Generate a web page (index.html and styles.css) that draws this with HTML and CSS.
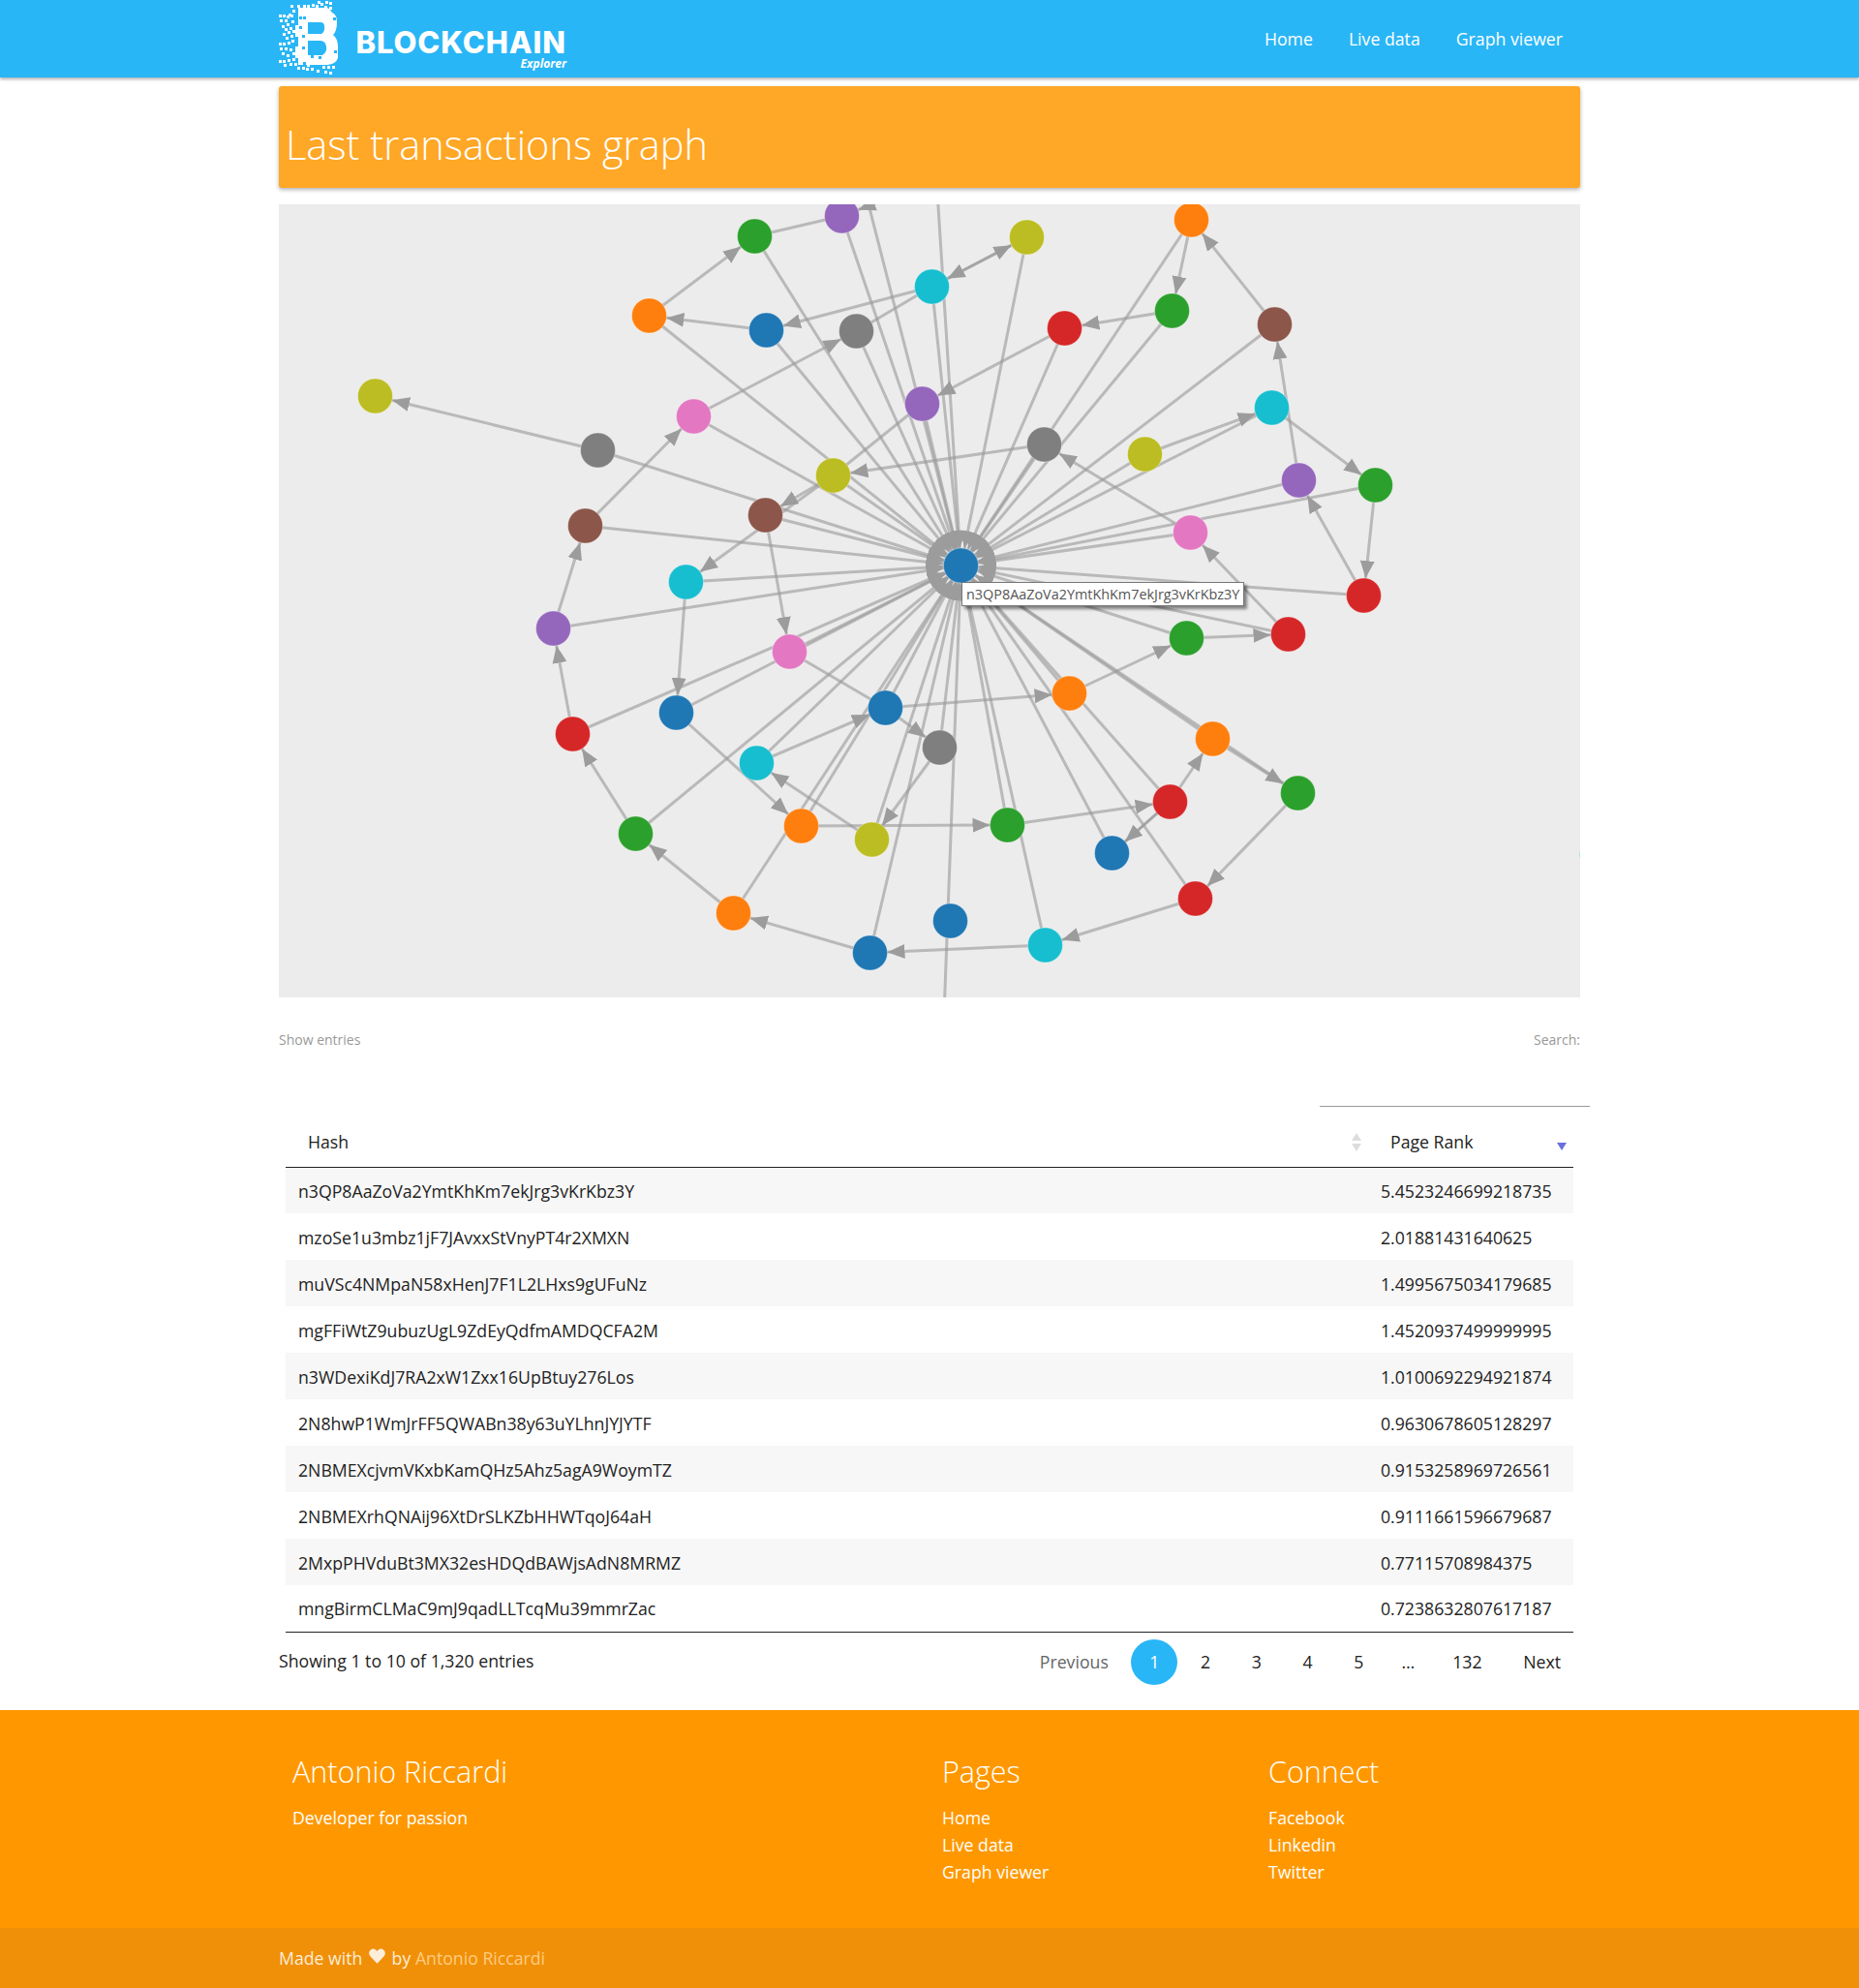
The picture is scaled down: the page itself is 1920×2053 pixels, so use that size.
FILE: index.html
```html
<!DOCTYPE html>
<html lang="en">
<head>
<meta charset="utf-8">
<title>Blockchain Explorer</title>
<link rel="stylesheet" href="styles.css">
</head>
<body>
<header class="topbar">
  <div class="topbar-inner">
    <a class="brand" href="#">
      <svg class="brand-mark" viewBox="0 0 66 78" width="66" height="78" aria-hidden="true">
        <path class="mark-fill" fill-rule="evenodd" d="M20 8 L50 8 Q53 9 55 13 Q60 15 60 23 Q60 32 56 36 Q61 40 61 48 L61 60 Q59 66 50 67 L20 67 L20 60 L17 60 L17 48 L20 48 L20 38 L17 38 L17 26 L20 26Z M30 23 L30 35 L44 35 Q48 32 47 27 Q47 23 43 23Z M30 42 L30 57 L45 57 Q50 54 49 48 Q48 42 43 42Z"/>
        <path class="mark-hole" d="M21 17h3v3h-3z M25 17h3v3h-3z M21 27h3v3h-3z M24 36h3v3h-3z M56 18h3v3h-3z M57 52h3v3h-3z M33 57h3v3h-3z M41 58h3v3h-3z M24 48h3v3h-3z M25 64h3v3h-3z"/>
        <path class="mark-fill" d="M25 5h3v3h-3z M29 5h3v3h-3z M34 4h3v3h-3z M38 5h3v3h-3z M43 3h3v3h-3z M48 1h3v3h-3z M52 2h3v3h-3z M47 6h3v3h-3z M52 7h3v3h-3z M40 1h3v3h-3z M19 5h3v3h-3z M12 5h3v3h-3z M14 10h3v3h-3z M10 14h3v3h-3z M0 15h3v3h-3z M4 15h3v3h-3z M8 16h3v3h-3z M12 15h3v3h-3z M1 20h3v3h-3z M6 20h3v3h-3z M13 21h3v3h-3z M8 24h3v3h-3z M3 26h3v3h-3z M11 28h3v3h-3z M6 29h3v3h-3z M14 31h3v3h-3z M9 32h3v3h-3z M4 34h3v3h-3z M12 36h3v3h-3z M7 38h3v3h-3z M0 44h3v3h-3z M4 44h3v3h-3z M9 43h3v3h-3z M13 41h3v3h-3z M1 49h3v3h-3z M6 49h3v3h-3z M11 50h3v3h-3z M14 54h3v3h-3z M3 54h3v3h-3z M8 56h3v3h-3z M0 62h3v3h-3z M4 62h3v3h-3z M9 61h3v3h-3z M14 60h3v3h-3z M5 66h3v3h-3z M11 65h3v3h-3z M16 65h3v3h-3z M19 69h3v3h-3z M24 69h3v3h-3z M28 70h3v3h-3z M33 70h3v3h-3z M39 72h3v3h-3z M45 68h3v3h-3z M50 68h3v3h-3z M55 68h3v3h-3z M47 73h3v3h-3z M52 74h3v3h-3z M29 66h3v3h-3z"/>
      </svg>
      <span class="brand-text">
        <span class="brand-name">BLOCKCHAIN</span>
        <span class="brand-sub">Explorer</span>
      </span>
    </a>
    <nav class="topnav">
      <a href="#">Home</a>
      <a href="#">Live data</a>
      <a href="#">Graph viewer</a>
    </nav>
  </div>
</header>

<main class="page">
  <section class="title-card"><h1>Last transactions graph</h1></section>

  <section class="graph">
    <svg class="graph-svg" viewBox="287.5 211 1344 819" width="1344" height="819" aria-hidden="true">
      <defs>
        <marker id="a" viewBox="0 -8 20 16" refX="36" refY="0" markerWidth="20" markerHeight="16" markerUnits="userSpaceOnUse" orient="auto">
          <path class="head" d="M0,-7.5 L18,0 L0,7.5Z"/>
        </marker>
      </defs>
      <g class="spokes">
        <line x1="617" y1="465" x2="992" y2="584" marker-end="url(#a)"/>
        <line x1="716" y1="430" x2="992" y2="584" marker-end="url(#a)"/>
        <line x1="604" y1="543" x2="992" y2="584" marker-end="url(#a)"/>
        <line x1="790" y1="532" x2="992" y2="584" marker-end="url(#a)"/>
        <line x1="670" y1="326" x2="992" y2="584" marker-end="url(#a)"/>
        <line x1="791" y1="341" x2="992" y2="584" marker-end="url(#a)"/>
        <line x1="779" y1="244" x2="992" y2="584" marker-end="url(#a)"/>
        <line x1="869" y1="223" x2="992" y2="584" marker-end="url(#a)"/>
        <line x1="884" y1="342" x2="992" y2="584" marker-end="url(#a)"/>
        <line x1="962" y1="296" x2="992" y2="584" marker-end="url(#a)"/>
        <line x1="968" y1="205" x2="992" y2="584" marker-end="url(#a)"/>
        <line x1="895" y1="205" x2="992" y2="584" marker-end="url(#a)"/>
        <line x1="952" y1="417" x2="992" y2="584" marker-end="url(#a)"/>
        <line x1="860" y1="491" x2="992" y2="584" marker-end="url(#a)"/>
        <line x1="708" y1="601" x2="992" y2="584" marker-end="url(#a)"/>
        <line x1="571" y1="649" x2="992" y2="584" marker-end="url(#a)"/>
        <line x1="1060" y1="245" x2="992" y2="584" marker-end="url(#a)"/>
        <line x1="1099" y1="339" x2="992" y2="584" marker-end="url(#a)"/>
        <line x1="1078" y1="459" x2="992" y2="584" marker-end="url(#a)"/>
        <line x1="1230" y1="227" x2="992" y2="584" marker-end="url(#a)"/>
        <line x1="1210" y1="321" x2="992" y2="584" marker-end="url(#a)"/>
        <line x1="1316" y1="335" x2="992" y2="584" marker-end="url(#a)"/>
        <line x1="1182" y1="469" x2="992" y2="584" marker-end="url(#a)"/>
        <line x1="1313" y1="421" x2="992" y2="584" marker-end="url(#a)"/>
        <line x1="1341" y1="496" x2="992" y2="584" marker-end="url(#a)"/>
        <line x1="1420" y1="501" x2="992" y2="584" marker-end="url(#a)"/>
        <line x1="1229" y1="550" x2="992" y2="584" marker-end="url(#a)"/>
        <line x1="1408" y1="615" x2="992" y2="584" marker-end="url(#a)"/>
        <line x1="1330" y1="655" x2="992" y2="584" marker-end="url(#a)"/>
        <line x1="1225" y1="659" x2="992" y2="584" marker-end="url(#a)"/>
        <line x1="1104" y1="716" x2="992" y2="584" marker-end="url(#a)"/>
        <line x1="1252" y1="763" x2="992" y2="584" marker-end="url(#a)"/>
        <line x1="1340" y1="819" x2="992" y2="584" marker-end="url(#a)"/>
        <line x1="1208" y1="828" x2="992" y2="584" marker-end="url(#a)"/>
        <line x1="1234" y1="928" x2="992" y2="584" marker-end="url(#a)"/>
        <line x1="1148" y1="881" x2="992" y2="584" marker-end="url(#a)"/>
        <line x1="1079" y1="976" x2="992" y2="584" marker-end="url(#a)"/>
        <line x1="1040" y1="852" x2="992" y2="584" marker-end="url(#a)"/>
        <line x1="975" y1="1035" x2="992" y2="584" marker-end="url(#a)"/>
        <line x1="970" y1="772" x2="992" y2="584" marker-end="url(#a)"/>
        <line x1="900" y1="867" x2="992" y2="584" marker-end="url(#a)"/>
        <line x1="898" y1="984" x2="992" y2="584" marker-end="url(#a)"/>
        <line x1="827" y1="853" x2="992" y2="584" marker-end="url(#a)"/>
        <line x1="757" y1="943" x2="992" y2="584" marker-end="url(#a)"/>
        <line x1="914" y1="731" x2="992" y2="584" marker-end="url(#a)"/>
        <line x1="781" y1="788" x2="992" y2="584" marker-end="url(#a)"/>
        <line x1="656" y1="861" x2="992" y2="584" marker-end="url(#a)"/>
        <line x1="815" y1="673" x2="992" y2="584" marker-end="url(#a)"/>
        <line x1="698" y1="736" x2="992" y2="584" marker-end="url(#a)"/>
        <line x1="591" y1="758" x2="992" y2="584" marker-end="url(#a)"/>
      </g>
      <g class="links">
        <line x1="617" y1="465" x2="387" y2="409" marker-end="url(#a)"/>
        <line x1="604" y1="543" x2="716" y2="430" marker-end="url(#a)"/>
        <line x1="716" y1="430" x2="884" y2="342" marker-end="url(#a)"/>
        <line x1="670" y1="326" x2="779" y2="244" marker-end="url(#a)"/>
        <line x1="791" y1="341" x2="670" y2="326" marker-end="url(#a)"/>
        <line x1="962" y1="296" x2="791" y2="341" marker-end="url(#a)"/>
        <line x1="779" y1="244" x2="869" y2="223"/>
        <line x1="930" y1="200" x2="869" y2="223" marker-end="url(#a)"/>
        <line x1="884" y1="342" x2="962" y2="296"/>
        <line x1="962" y1="296" x2="1060" y2="245" marker-end="url(#a)"/>
        <line x1="1060" y1="245" x2="962" y2="296" marker-end="url(#a)"/>
        <line x1="952" y1="417" x2="860" y2="491"/>
        <line x1="860" y1="491" x2="790" y2="532" marker-end="url(#a)"/>
        <line x1="860" y1="491" x2="708" y2="601" marker-end="url(#a)"/>
        <line x1="790" y1="532" x2="815" y2="673" marker-end="url(#a)"/>
        <line x1="1099" y1="339" x2="952" y2="417" marker-end="url(#a)"/>
        <line x1="1078" y1="459" x2="860" y2="491" marker-end="url(#a)"/>
        <line x1="1230" y1="227" x2="1210" y2="321" marker-end="url(#a)"/>
        <line x1="1210" y1="321" x2="1099" y2="339" marker-end="url(#a)"/>
        <line x1="1316" y1="335" x2="1230" y2="227" marker-end="url(#a)"/>
        <line x1="1341" y1="496" x2="1316" y2="335" marker-end="url(#a)"/>
        <line x1="1182" y1="469" x2="1313" y2="421" marker-end="url(#a)"/>
        <line x1="1229" y1="550" x2="1078" y2="459" marker-end="url(#a)"/>
        <line x1="1313" y1="421" x2="1420" y2="501" marker-end="url(#a)"/>
        <line x1="1420" y1="501" x2="1408" y2="615" marker-end="url(#a)"/>
        <line x1="1408" y1="615" x2="1341" y2="496" marker-end="url(#a)"/>
        <line x1="1330" y1="655" x2="1229" y2="550" marker-end="url(#a)"/>
        <line x1="1225" y1="659" x2="1330" y2="655" marker-end="url(#a)"/>
        <line x1="1104" y1="716" x2="1225" y2="659" marker-end="url(#a)"/>
        <line x1="914" y1="731" x2="1104" y2="716" marker-end="url(#a)"/>
        <line x1="815" y1="673" x2="914" y2="731"/>
        <line x1="914" y1="731" x2="970" y2="772" marker-end="url(#a)"/>
        <line x1="781" y1="788" x2="914" y2="731" marker-end="url(#a)"/>
        <line x1="708" y1="601" x2="698" y2="736" marker-end="url(#a)"/>
        <line x1="698" y1="736" x2="827" y2="853" marker-end="url(#a)"/>
        <line x1="571" y1="649" x2="604" y2="543" marker-end="url(#a)"/>
        <line x1="591" y1="758" x2="571" y2="649" marker-end="url(#a)"/>
        <line x1="656" y1="861" x2="591" y2="758" marker-end="url(#a)"/>
        <line x1="757" y1="943" x2="656" y2="861" marker-end="url(#a)"/>
        <line x1="898" y1="984" x2="757" y2="943" marker-end="url(#a)"/>
        <line x1="827" y1="853" x2="1040" y2="852" marker-end="url(#a)"/>
        <line x1="900" y1="867" x2="781" y2="788" marker-end="url(#a)"/>
        <line x1="970" y1="772" x2="900" y2="867" marker-end="url(#a)"/>
        <line x1="1079" y1="976" x2="898" y2="984" marker-end="url(#a)"/>
        <line x1="1234" y1="928" x2="1079" y2="976" marker-end="url(#a)"/>
        <line x1="1340" y1="819" x2="1234" y2="928" marker-end="url(#a)"/>
        <line x1="1252" y1="763" x2="1340" y2="819" marker-end="url(#a)"/>
        <line x1="1208" y1="828" x2="1252" y2="763" marker-end="url(#a)"/>
        <line x1="1208" y1="828" x2="1148" y2="881" marker-end="url(#a)"/>
        <line x1="1148" y1="881" x2="1208" y2="828"/>
        <line x1="1040" y1="852" x2="1208" y2="828" marker-end="url(#a)"/>
      </g>
      <circle class="hub-ring" cx="992" cy="584" r="31"/>
      <g class="nodes">
        <circle class="c-blue" cx="992" cy="584" r="18"/>
        <circle class="c-olive" cx="387" cy="409" r="18"/>
        <circle class="c-gray" cx="617" cy="465" r="18"/>
        <circle class="c-pink" cx="716" cy="430" r="18"/>
        <circle class="c-brown" cx="604" cy="543" r="18"/>
        <circle class="c-brown" cx="790" cy="532" r="18"/>
        <circle class="c-olive" cx="860" cy="491" r="18"/>
        <circle class="c-orange" cx="670" cy="326" r="18"/>
        <circle class="c-blue" cx="791" cy="341" r="18"/>
        <circle class="c-gray" cx="884" cy="342" r="18"/>
        <circle class="c-green" cx="779" cy="244" r="18"/>
        <circle class="c-purple" cx="869" cy="223" r="18"/>
        <circle class="c-cyan" cx="962" cy="296" r="18"/>
        <circle class="c-purple" cx="952" cy="417" r="18"/>
        <circle class="c-cyan" cx="708" cy="601" r="18"/>
        <circle class="c-olive" cx="1060" cy="245" r="18"/>
        <circle class="c-orange" cx="1230" cy="227" r="18"/>
        <circle class="c-green" cx="1210" cy="321" r="18"/>
        <circle class="c-red" cx="1099" cy="339" r="18"/>
        <circle class="c-brown" cx="1316" cy="335" r="18"/>
        <circle class="c-cyan" cx="1313" cy="421" r="18"/>
        <circle class="c-olive" cx="1182" cy="469" r="18"/>
        <circle class="c-gray" cx="1078" cy="459" r="18"/>
        <circle class="c-purple" cx="1341" cy="496" r="18"/>
        <circle class="c-green" cx="1420" cy="501" r="18"/>
        <circle class="c-pink" cx="1229" cy="550" r="18"/>
        <circle class="c-red" cx="1408" cy="615" r="18"/>
        <circle class="c-purple" cx="571" cy="649" r="18"/>
        <circle class="c-pink" cx="815" cy="673" r="18"/>
        <circle class="c-blue" cx="698" cy="736" r="18"/>
        <circle class="c-red" cx="591" cy="758" r="18"/>
        <circle class="c-blue" cx="914" cy="731" r="18"/>
        <circle class="c-gray" cx="970" cy="772" r="18"/>
        <circle class="c-cyan" cx="781" cy="788" r="18"/>
        <circle class="c-green" cx="656" cy="861" r="18"/>
        <circle class="c-orange" cx="827" cy="853" r="18"/>
        <circle class="c-olive" cx="900" cy="867" r="18"/>
        <circle class="c-orange" cx="757" cy="943" r="18"/>
        <circle class="c-blue" cx="898" cy="984" r="18"/>
        <circle class="c-blue" cx="981" cy="951" r="18"/>
        <circle class="c-cyan" cx="1079" cy="976" r="18"/>
        <circle class="c-red" cx="1234" cy="928" r="18"/>
        <circle class="c-green" cx="1040" cy="852" r="18"/>
        <circle class="c-blue" cx="1148" cy="881" r="18"/>
        <circle class="c-red" cx="1208" cy="828" r="18"/>
        <circle class="c-orange" cx="1252" cy="763" r="18"/>
        <circle class="c-green" cx="1340" cy="819" r="18"/>
        <circle class="c-orange" cx="1104" cy="716" r="18"/>
        <circle class="c-green" cx="1225" cy="659" r="18"/>
        <circle class="c-red" cx="1330" cy="655" r="18"/>
        <circle class="c-cyan" cx="1649" cy="883" r="18"/>
      </g>
    </svg>
    <div class="tooltip">n3QP8AaZoVa2YmtKhKm7ekJrg3vKrKbz3Y</div>
  </section>

  <div class="table-top">
    <span>Show entries</span>
    <span>Search:</span>
  </div>
  <div class="head-rule"></div>

  <table class="ranks">
    <thead>
      <tr>
        <th class="col-hash">Hash<span class="sort-both"></span></th>
        <th class="col-rank">Page Rank<span class="sort-desc"></span></th>
      </tr>
    </thead>
    <tbody>
      <tr><td>n3QP8AaZoVa2YmtKhKm7ekJrg3vKrKbz3Y</td><td>5.4523246699218735</td></tr>
      <tr><td>mzoSe1u3mbz1jF7JAvxxStVnyPT4r2XMXN</td><td>2.01881431640625</td></tr>
      <tr><td>muVSc4NMpaN58xHenJ7F1L2LHxs9gUFuNz</td><td>1.4995675034179685</td></tr>
      <tr><td>mgFFiWtZ9ubuzUgL9ZdEyQdfmAMDQCFA2M</td><td>1.4520937499999995</td></tr>
      <tr><td>n3WDexiKdJ7RA2xW1Zxx16UpBtuy276Los</td><td>1.0100692294921874</td></tr>
      <tr><td>2N8hwP1WmJrFF5QWABn38y63uYLhnJYJYTF</td><td>0.9630678605128297</td></tr>
      <tr><td>2NBMEXcjvmVKxbKamQHz5Ahz5agA9WoymTZ</td><td>0.9153258969726561</td></tr>
      <tr><td>2NBMEXrhQNAij96XtDrSLKZbHHWTqoJ64aH</td><td>0.9111661596679687</td></tr>
      <tr><td>2MxpPHVduBt3MX32esHDQdBAWjsAdN8MRMZ</td><td>0.77115708984375</td></tr>
      <tr><td>mngBirmCLMaC9mJ9qadLLTcqMu39mmrZac</td><td>0.7238632807617187</td></tr>
    </tbody>
  </table>

  <div class="table-bottom">
    <div class="info">Showing 1 to 10 of 1,320 entries</div>
    <div class="pager">
      <a class="pg pg-muted" href="#">Previous</a>
      <a class="pg pg-current" href="#">1</a>
      <a class="pg" href="#">2</a>
      <a class="pg" href="#">3</a>
      <a class="pg" href="#">4</a>
      <a class="pg" href="#">5</a>
      <span class="pg pg-gap">…</span>
      <a class="pg" href="#">132</a>
      <a class="pg" href="#">Next</a>
    </div>
  </div>
</main>

<footer class="site-footer">
  <div class="footer-main">
    <div class="fcol fcol-about">
      <h2>Antonio Riccardi</h2>
      <p>Developer for passion</p>
    </div>
    <div class="fcol fcol-pages">
      <h2>Pages</h2>
      <ul>
        <li><a href="#">Home</a></li>
        <li><a href="#">Live data</a></li>
        <li><a href="#">Graph viewer</a></li>
      </ul>
    </div>
    <div class="fcol fcol-connect">
      <h2>Connect</h2>
      <ul>
        <li><a href="#">Facebook</a></li>
        <li><a href="#">Linkedin</a></li>
        <li><a href="#">Twitter</a></li>
      </ul>
    </div>
  </div>
  <div class="footer-bottom">
    <div class="footer-bottom-inner">
      Made with
      <svg class="heart" viewBox="0 0 24 22" width="17" height="16" aria-hidden="true"><path d="M12 22 L2 11.5 C-1 8 0 2.5 4 1 C7 -0.2 10 1 12 4 C14 1 17 -0.2 20 1 C24 2.5 25 8 22 11.5Z"/></svg>
      by <a href="#">Antonio Riccardi</a>
    </div>
  </div>
</footer>
</body>
</html>
```

FILE: styles.css
```css
* { box-sizing: border-box; }
html, body { margin: 0; padding: 0; }
body {
  font-family: "Open Sans", "Noto Sans", "Liberation Sans", sans-serif;
  font-size: 17.7px;
  color: #222;
  background: #fff;
}
a { color: inherit; text-decoration: none; }

.topbar {
  height: 80px;
  background: #29b6f6;
  box-shadow: 0 2px 3px rgba(0, 0, 0, .3);
  position: relative;
}
.topbar-inner {
  width: 1344px;
  height: 80px;
  margin: 0 auto;
  display: flex;
  justify-content: space-between;
  align-items: center;
}
.brand { display: flex; align-items: flex-start; height: 78px; align-self: flex-start; color: #fff; }
.brand-mark { display: block; flex: none; }
.mark-fill { fill: #fff; }
.mark-hole { fill: #29b6f6; }
.brand-text { display: flex; flex-direction: column; align-items: flex-end; margin: 28px 0 0 14px; width: 217px; }
.brand-name { font-family: "Inter", sans-serif; font-weight: 800; font-size: 31px; line-height: 31px; letter-spacing: .9px; white-space: nowrap; }
.brand-sub { font-family: "Open Sans", sans-serif; font-weight: 700; font-style: italic; font-size: 12px; line-height: 13px; }

.topnav { display: flex; gap: 37px; padding-right: 18px; color: #fff; font-size: 17.7px; }

.page { width: 1344px; margin: 0 auto; }

.title-card {
  height: 105px;
  margin-top: 9px;
  padding: 31px 7px 0;
  background: #ffa726;
  border-radius: 3px;
  box-shadow: 0 2px 4px rgba(0, 0, 0, .3);
}
.title-card h1 { margin: 0; font-size: 41.5px; line-height: 58px; font-weight: 350; color: #fff; }

.graph {
  position: relative;
  height: 819px;
  margin-top: 17px;
  background: #ececec;
  overflow: hidden;
}
.graph-svg { display: block; }
.spokes line, .links line { stroke: #999; stroke-opacity: .62; stroke-width: 3; }
.head { fill: #9c9c9c; }
.hub-ring { fill: none; stroke: #9c9c9c; stroke-width: 10; }
.nodes circle { stroke: #fff; stroke-opacity: .35; stroke-width: 1; }
.c-blue { fill: #1f77b4; }
.c-orange { fill: #ff7f0e; }
.c-green { fill: #2ca02c; }
.c-red { fill: #d62728; }
.c-purple { fill: #9467bd; }
.c-brown { fill: #8c564b; }
.c-pink { fill: #e377c2; }
.c-gray { fill: #7f7f7f; }
.c-olive { fill: #bcbd22; }
.c-cyan { fill: #17becf; }

.tooltip {
  position: absolute;
  left: 705px;
  top: 390px;
  height: 25px;
  padding: 0 4px;
  background: #fff;
  border: 1px solid #777;
  box-shadow: 3px 3px 3px rgba(0, 0, 0, .45);
  font-size: 14.4px;
  line-height: 23px;
  color: #555;
  white-space: nowrap;
}

.table-top {
  display: flex;
  justify-content: space-between;
  margin-top: 34px;
  font-size: 14px;
  line-height: 20px;
  color: #999;
}
.head-rule {
  width: 279px;
  height: 1px;
  margin: 58px -10px 0 auto;
  background: #999;
}
.ranks {
  width: 1330px;
  margin: 0 7px;
  border-collapse: collapse;
  table-layout: fixed;
}
.ranks th {
  position: relative;
  height: 62px;
  padding: 10px 0 0 23px;
  text-align: left;
  font-weight: 400;
  border-bottom: 1px solid #222;
}
.col-hash { width: 1118px; }
.col-rank { width: 212px; }
.ranks td { height: 48px; padding: 1px 0 0 13px; white-space: nowrap; }
.ranks tbody tr:nth-child(odd) { background: #f7f7f7; }
.ranks tbody tr:last-child td { border-bottom: 1px solid #222; }

.sort-both::before, .sort-both::after, .sort-desc::after {
  content: "";
  position: absolute;
  width: 0;
  height: 0;
  border-left: 5px solid transparent;
  border-right: 5px solid transparent;
}
.sort-both::before { right: 7px; top: 27px; border-bottom: 8px solid #ddd; }
.sort-both::after { right: 7px; top: 38px; border-top: 8px solid #ddd; }
.sort-desc::after { right: 7px; top: 37px; border-top: 8px solid #6a6fdc; }

.table-bottom {
  display: flex;
  justify-content: space-between;
  align-items: flex-start;
  height: 80px;
  padding-top: 7px;
}
.info { line-height: 44px; }
.pager { display: flex; gap: 4.6px; align-items: center; padding-right: 1px; }
.pg { display: block; padding: 0 19px; height: 47px; line-height: 47px; color: #222; }
.pg-muted { color: #666; }
.pg-current { width: 48px; padding: 0; text-align: center; background: #29b6f6; color: #fff; border-radius: 50%; }
.pg-gap { padding: 0 15.5px; }

.site-footer { background: #ff9800; color: #fff; }
.footer-main {
  height: 225px;
  width: 1344px;
  margin: 0 auto;
  display: grid;
  grid-template-columns: 671px 337px 1fr;
  padding: 43px 0 0 14px;
}
.fcol h2 { margin: 0 0 13px; font-size: 30.5px; line-height: 41px; font-weight: 350; }
.fcol p { margin: 0; line-height: 28px; }
.fcol ul { margin: 0; padding: 0; list-style: none; }
.fcol li { line-height: 28px; }

.footer-bottom { height: 62px; background: #f09008; }
.footer-bottom-inner {
  width: 1344px;
  margin: 0 auto;
  line-height: 62px;
  color: rgba(255, 255, 255, .85);
}
.footer-bottom-inner a { color: #ffcc80; }
.heart { fill: rgba(255, 255, 255, .85); vertical-align: 1px; margin: 0 2px; }
```
